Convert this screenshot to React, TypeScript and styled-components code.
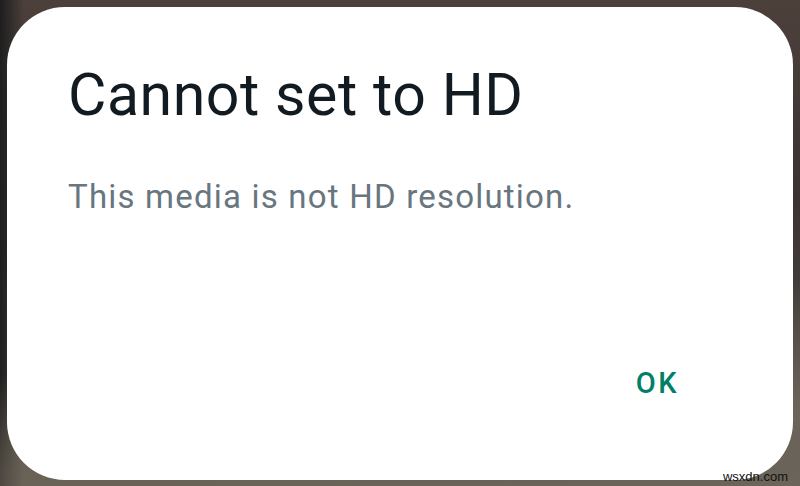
import React from 'react'
import styled, { createGlobalStyle } from 'styled-components'

const GlobalStyle = createGlobalStyle`
  html, body {
    margin: 0;
    padding: 0;
  }
  #root {
    width: 800px;
    height: 486px;
  }
`

const Backdrop = styled.div`
  position: relative;
  width: 800px;
  height: 486px;
  box-sizing: border-box;
  padding: 7px 7px 6px 7px;
  background:
    radial-gradient(ellipse 300px 120px at 120px 486px, #6a6256 0%, rgba(106, 98, 86, 0) 100%),
    radial-gradient(ellipse 260px 140px at 800px 420px, #6d655b 0%, rgba(109, 101, 91, 0) 100%),
    linear-gradient(90deg, #1e1e1e 0%, rgba(30, 30, 30, 0) 3%),
    linear-gradient(180deg, #4c403b 0%, #3a3331 40%, #4a4540 75%, #6a645a 100%);
  overflow: hidden;
`

const Dialog = styled.div`
  display: flex;
  flex-direction: column;
  height: 100%;
  box-sizing: border-box;
  padding: 58px 114px 82px 61px;
  background: #ffffff;
  border-radius: 58px;
  font-family: Roboto, 'Noto Sans', sans-serif;
`

const Title = styled.h1`
  margin: 0;
  font-size: 59px;
  line-height: 59px;
  font-weight: 400;
  letter-spacing: 0.55px;
  color: #111b21;
`

const Message = styled.p`
  margin: 56px 0 0 0;
  font-size: 33px;
  line-height: 33px;
  color: #687680;
  letter-spacing: 1.2px;
`

const Actions = styled.div`
  display: flex;
  justify-content: flex-end;
  margin-top: auto;
`

const ActionButton = styled.button`
  border: none;
  background: none;
  padding: 0;
  font-family: Roboto, 'Noto Sans', sans-serif;
  font-size: 29px;
  line-height: 29px;
  font-weight: 500;
  letter-spacing: 2.5px;
  color: #008069;
  cursor: pointer;
`

const Watermark = styled.span`
  position: absolute;
  right: 12px;
  bottom: 2px;
  font-family: 'Liberation Sans', Arial, sans-serif;
  font-size: 13px;
  color: #111111;
`

export default function App() {
  return (
    <>
      <GlobalStyle />
      <Backdrop>
        <Dialog>
          <Title>Cannot set to HD</Title>
          <Message>This media is not HD resolution.</Message>
          <Actions>
            <ActionButton>OK</ActionButton>
          </Actions>
        </Dialog>
        <Watermark>wsxdn.com</Watermark>
      </Backdrop>
    </>
  )
}
